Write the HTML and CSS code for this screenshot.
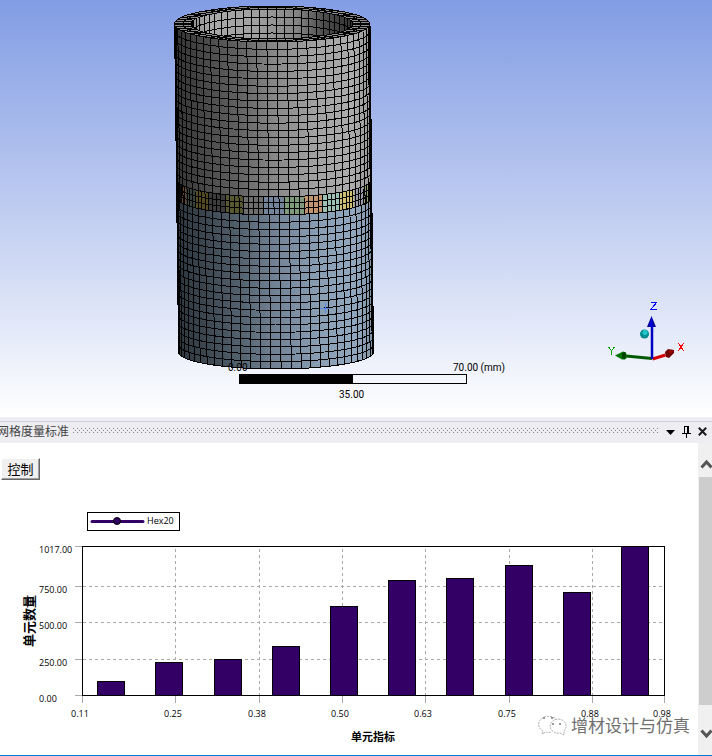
FILE: index.html
```html
<!DOCTYPE html>
<html lang="zh-CN">
<head>
<meta charset="utf-8">
<title>网格度量标准</title>
<link rel="stylesheet" href="styles.css">
</head>
<body>
<main class="app">
  <section class="viewport" aria-label="3D">
    <svg class="scene" viewBox="0 0 712 417">
      <defs>
        <linearGradient id="gray"><stop offset="0" stop-color="#333"/><stop offset=".15" stop-color="#484848"/><stop offset=".32" stop-color="#606060"/><stop offset=".5" stop-color="#868686"/><stop offset=".72" stop-color="#a2a2a2"/><stop offset=".9" stop-color="#acacac"/><stop offset="1" stop-color="#999"/></linearGradient>
        <linearGradient id="blue"><stop offset="0" stop-color="#2c353c"/><stop offset=".15" stop-color="#3c4750"/><stop offset=".32" stop-color="#53616e"/><stop offset=".5" stop-color="#728295"/><stop offset=".72" stop-color="#899eb3"/><stop offset=".9" stop-color="#91a7bd"/><stop offset="1" stop-color="#8195a8"/></linearGradient>
        <linearGradient id="inner"><stop offset="0" stop-color="#8e8e8e"/><stop offset=".12" stop-color="#aaa"/><stop offset=".4" stop-color="#a0a0a0"/><stop offset=".65" stop-color="#858585"/><stop offset=".82" stop-color="#4c4c4c"/><stop offset="1" stop-color="#333"/></linearGradient>
        <clipPath id="bore"><ellipse cx="272" cy="24" rx="81" ry="15"/></clipPath>
      </defs>
      <g id="mesh" class="mesh"></g>
      <path class="pick" d="M320 308.500h10M325.500 303v10"/>
      <g class="ruler">
        <rect x="239.500" y="374.500" width="227" height="9" fill="none" stroke="#000"/>
        <rect x="239" y="374" width="114" height="10"/>
        <text x="228" y="371">0.00</text>
        <text x="453" y="371">70.00 (mm)</text>
        <text x="339" y="398">35.00</text>
      </g>
      <g class="triad">
        <path d="M652 358.500L626 356" stroke="#005a00" stroke-width="3"/>
        <path d="M615 355.500l8-4 3 1 1 5-2 2-3 0z" fill="#007400"/><path d="M622 353l3-1 1 3-1 4-3-1z" fill="#004000"/>
        <path d="M652.500 359l13-4" stroke="#d80000" stroke-width="3"/>
        <path d="M665 352l3-3 6 1 0 3-5 5-3-1z" fill="#700000"/><path d="M669 350l5 1-4 3z" fill="#a00000"/>
        <path d="M652 359V325" stroke="#0000c0" stroke-width="2.500"/>
        <path d="M651.500 316l4.500 11h-9z" fill="#0000a0"/><path d="M651.500 316l1 11h-3z" fill="#0000e0"/>
        <circle cx="644.500" cy="334" r="4.500" fill="#008c90"/><circle cx="645" cy="332.500" r="2.500" fill="#20c8cc"/>
        <g class="axis">
          <path d="M651 302.500h5.500l-5.500 7h6" stroke="#00f"/>
          <path d="M608.500 347l3 3.500v4.500m0-4.500l3-3.500" stroke="#00a000"/>
          <path d="M678.500 343l5 8m0-8l-5 8" stroke="#f00"/>
        </g>
      </g>
    </svg>
  </section>

  <section class="panel">
    <header class="bar">
      <h1 class="title">网格度量标准</h1>
      <svg class="grip" aria-hidden="true"><defs><pattern id="dots" width="4" height="4" patternUnits="userSpaceOnUse"><path d="M0 0h1v1H0zM2 2h1v1H2z" fill="#888"/></pattern></defs><rect width="100%" height="5" fill="url(#dots)"/></svg>
      <button class="tool" aria-label="菜单"><svg width="9" height="12"><path d="M0 4h9L4.500 9z"/></svg></button>
      <button class="tool" aria-label="固定"><svg width="9" height="12"><path d="M2 0h5v7h2v1H5v4H4V8H0V7h2zM3 1v6h2V1z" fill-rule="evenodd"/></svg></button>
      <button class="tool" aria-label="关闭"><svg width="9" height="12"><path d="M.8 1.800l7.400 7.400m0-7.400L.8 9.200" stroke="#1b1b1b" stroke-width="2"/></svg></button>
    </header>
    <div class="body">
      <div class="content">
        <button class="control">控制</button>
        <svg class="chart" viewBox="0 480 698 275">
          <g id="plot"></g>
          <g class="legend">
            <rect x="87.500" y="512.500" width="92" height="18" fill="#fff" stroke="#000"/>
            <path d="M92 521.500h51" stroke="#306" stroke-width="3" stroke-linecap="round"/>
            <circle cx="117" cy="521" r="3.500" fill="#306" stroke="#000"/>
            <text x="147" y="524">Hex20</text>
          </g>
          <text class="name" x="351" y="741">单元指标</text>
          <text class="name side" transform="translate(34 647) rotate(-90)">单元数量</text>
          <g class="mark">
            <path class="bubble" d="M557 720a10 8 0 1 0-14 11l-1 3 4-2q2 1 5 0"/>
            <path class="bubble" d="M564 731a8 7 0 1 0-4 2l4 2z"/>
            <path d="M543 718h2m6 0h2m-1 6h2m5 0h2" stroke="#999" stroke-width="2"/>
            <text x="571" y="732">增材设计与仿真</text>
          </g>
        </svg>
      </div>
      <div class="scroll">
        <button class="arrow" aria-label="向上"><svg width="14" height="34"><path d="M3.500 24.500l5-5.500 5 5.500"/></svg></button>
        <div class="thumb"></div>
        <button class="arrow" aria-label="向下"><svg width="14" height="50"><path d="M3.500 25.500l5 5.500 5-5.500"/></svg></button>
      </div>
    </div>
  </section>
</main>
<script src="script.js"></script>
</body>
</html>
```
FILE: styles.css
```css
* { box-sizing: border-box; }
body { margin: 0; background: #fff; font-family: "Open Sans", "Noto Sans CJK SC", sans-serif; }
button { margin: 0; padding: 0; border: 0; background: none; font: inherit; }
svg { display: block; }
.app { display: flex; flex-direction: column; min-height: 100vh; border-bottom: 1px solid #0078d7; overflow: hidden; }
.viewport { background: linear-gradient(#829de4, #a9bbec 32%, #d8e0f6 70%, #fff); }
.scene { width: 100%; height: auto; }
.mesh, .axis { shape-rendering: crispEdges; }
.wire { fill: none; stroke: #000; stroke-width: 1; }
.edge { fill: none; stroke: #000; stroke-width: 2; }
.pick { stroke: #5b85e8; fill: none; shape-rendering: crispEdges; }
.ruler { shape-rendering: crispEdges; }
.ruler text { font: 10px Roboto, sans-serif; }
.triad { fill: none; }
.panel { display: flex; flex-direction: column; flex: 1; }
.bar { display: flex; align-items: center; gap: 7px; height: 26px; padding-right: 5px; background: linear-gradient(#ccd, #ccd) 0 4px / 100% 1px no-repeat #eeeef2; }
.title { margin: 2px -3px 0 -3px; font: 12px/20px "Noto Sans CJK SC", sans-serif; color: #444; white-space: nowrap; }
.grip { flex: 1; min-width: 0; height: 5px; margin-top: 1px; shape-rendering: crispEdges; }
.tool { display: flex; margin-top: 4px; }
.body { display: flex; flex: 1; }
.content { flex: 1; min-width: 0; padding-top: 15px; }
.control { display: block; width: 39px; height: 22px; margin-left: 1px; border: 1px solid; border-color: #fff #696969 #696969 #fff; box-shadow: inset -1px -1px #a0a0a0; background: #f0f0f0; font: 13px/18px "Noto Sans CJK SC", sans-serif; color: #000; }
.chart { width: 100%; height: auto; font-size: 9px; fill: #000; }
.grid { stroke: #a9a9a9; stroke-dasharray: 3 3; shape-rendering: crispEdges; }
.tick { stroke: #a9a9a9; shape-rendering: crispEdges; }
.column { fill: #306; stroke: #000; shape-rendering: crispEdges; }
.frame { fill: none; stroke: #000; shape-rendering: crispEdges; }
.name { font: bold 11px "Noto Sans CJK SC", sans-serif; }
.side { font-size: 13px; }
.mark text { font: 17px "Noto Sans CJK SC", sans-serif; fill: #707070; }
.bubble { fill: #fff; stroke: #aaa; stroke-dasharray: 2 1; }
.scroll { display: flex; flex-direction: column; width: 14px; background: #f0f0f0; }
.thumb { flex: 1; margin-left: 1px; background: #cdcdcd; }
.arrow path { fill: none; stroke: #555; stroke-width: 3; }
```
FILE: script.js
```js
const NS = "http://www.w3.org/2000/svg";
function add(parent, tag, attrs, text) {
  const el = document.createElementNS(NS, tag);
  for (const key in attrs) el.setAttribute(key, attrs[key]);
  if (text) el.textContent = text;
  parent.appendChild(el);
}

// Cylinder mesh: angle 0 faces the viewer, t runs from the top rim to the base.
const mesh = document.getElementById("mesh");
const RX = 97.5, CY = 24;
const point = (a, t) => [272 + 4 * t + RX * Math.sin(a), CY + 328 * t + (18 - t) * Math.cos(a)];
const line = pts => "M" + pts.map(p => p[0].toFixed(1) + " " + p[1].toFixed(1)).join("L");
const arc = (t, from = -90, to = 90) => {
  const pts = [];
  const step = (to - from) / 30;
  for (let i = 0; i <= 30; i++) pts.push(point((from + i * step) * Math.PI / 180, t));
  return pts;
};
const patch = (t0, t1, fill, from, to) =>
  add(mesh, "path", { d: line(arc(t0, from, to).concat(arc(t1, from, to).reverse())) + "Z", fill });

const T1 = 0.474, T2 = 0.529;
patch(0, T1, "url(#gray)");
patch(T2, 1, "url(#blue)");
const band = [
  [-98, -92, "#111"], [-92, -88, "#6b4a30"], [-88, -78, "#35413a"], [-78, -65, "#554b22"],
  [-65, -48, "#3c3c3c"], [-48, -30, "#57582f"], [-30, -10, "#6d6d6d"], [-10, 10, "#73849b"],
  [10, 30, "#7f9b7c"], [30, 49, "#c0956f"], [49, 66, "#9dc0b5"], [66, 80, "#cdc074"],
  [80, 89, "#9999a8"], [89, 94, "#8c9d6f"], [94, 98, "#111"]
];
const angle = x => Math.asin(Math.max(-1, Math.min(1, x / RX))) * 180 / Math.PI;
band.forEach(([a, b, fill]) => patch(T1, T2, fill, angle(a), angle(b)));

let wires = "";
for (let i = 0; i <= 21; i++) {
  wires += line(arc(T1 * i / 21)) + line(arc(T2 + (1 - T2) * i / 21));
}
wires += line(arc(T1 + (T2 - T1) / 3)) + line(arc(T1 + (T2 - T1) * 2 / 3));
for (let deg = -87; deg < 90; deg += 6) {
  const a = deg * Math.PI / 180;
  wires += line([point(a, 0), point(a, 1)]);
}
for (let deg = -90; deg < 90; deg += 6) {
  const a = deg * Math.PI / 180;
  wires += line([point(a, T1), point(a, T2)]);
}
add(mesh, "path", { class: "wire", d: wires });
add(mesh, "path", { class: "edge", d: "M175.500 24L179.500 351M369.500 24L373 351" });

// Rim and bore
add(mesh, "ellipse", { cx: 272, cy: CY, rx: RX, ry: 18, fill: "#8c8c8c", stroke: "#000" });
add(mesh, "ellipse", { cx: 272, cy: CY, rx: 81, ry: 15, fill: "url(#inner)", stroke: "#000" });
let rim = "", bore = "";
const ring = (a, rx, ry, dy = 0) => [272 + rx * Math.sin(a), CY + dy + ry * Math.cos(a)];
for (let deg = 3; deg < 363; deg += 6) {
  const a = deg * Math.PI / 180;
  rim += line([ring(a, RX, 18), ring(a, 81, 15)]);
  if (deg > 90 && deg < 270) bore += line([ring(a, 81, 15), ring(a, 81, 15, 40)]);
}
for (let k = 1; k < 5; k++) {
  const pts = [];
  for (let deg = 90; deg <= 270; deg += 6) pts.push(ring(deg * Math.PI / 180, 81, 15, k * 8));
  bore += line(pts);
}
add(mesh, "path", { class: "wire", d: rim });
add(mesh, "ellipse", { class: "wire", cx: 272, cy: CY, rx: 89, ry: 16.5 });
add(mesh, "path", { class: "wire", d: bore, "clip-path": "url(#bore)" });

// Histogram
const plot = document.getElementById("plot");
const path = (cls, d) => add(plot, "path", { class: cls, d });
[["1017.00", 546], ["750.00", 586], ["500.00", 622], ["250.00", 659], ["0.00", 695]].forEach(([label, y]) => {
  path("tick", `M75 ${y + 0.5}H82`);
  if (y > 546 && y < 695) path("grid", `M83 ${y + 0.5}H664`);
  add(plot, "text", { x: 39, y: y + 7 }, label);
});
[["0.11", 82], ["0.25", 175], ["0.38", 259], ["0.50", 342], ["0.63", 425], ["0.75", 509], ["0.88", 592], ["0.98", 664]].forEach(([label, x]) => {
  path("tick", `M${x + 0.5} 696V703`);
  if (x > 82 && x < 664) path("grid", `M${x + 0.5} 549V695`);
  add(plot, "text", { x: x - 2, y: 717, "text-anchor": "middle" }, label);
});
[681, 662, 659, 646, 606, 580, 578, 565, 592, 546].forEach((y, i) => {
  add(plot, "rect", { class: "column", x: Math.round(97.2 + i * 58.2) + 0.5, y: y + 0.5, width: 27, height: 695 - y });
});
add(plot, "rect", { class: "frame", x: 82.5, y: 546.5, width: 582, height: 149 });
```
